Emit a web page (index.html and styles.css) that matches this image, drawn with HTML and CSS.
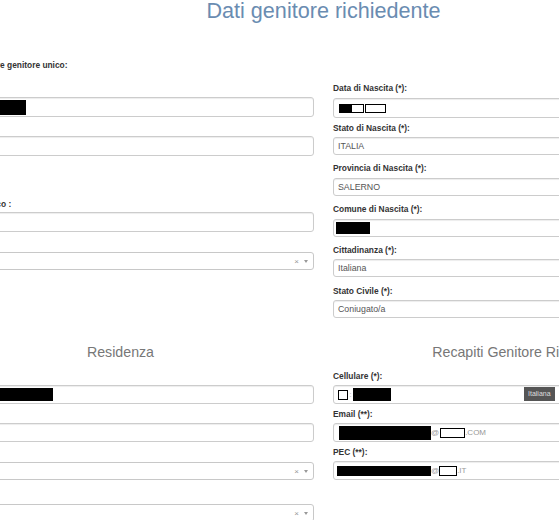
FILE: index.html
```html
<!DOCTYPE html>
<html lang="it">
<head>
<meta charset="UTF-8">
<meta name="viewport" content="width=device-width, initial-scale=1.0">
<title>Dati genitore richiedente</title>
<link rel="stylesheet" href="styles.css">
</head>
<body>
    <div class="page">
        <h2 class="title">Dati genitore richiedente</h2>

        <div class="row row-top">
            <div class="col">
                <label class="lbl lbl-top">Dichiara di essere genitore unico:</label>

                <div class="field">
                    <label class="lbl">Cognome (*):</label>
                    <div class="input"><span class="box fill w-cognome"></span></div>
                </div>
                <div class="field">
                    <label class="lbl">Nome (*):</label>
                    <div class="input"></div>
                </div>
                <div class="field">
                    <label class="lbl">Sesso (*):</label>
                    <div class="radios"><span class="radio"></span>M <span class="radio"></span>F</div>
                </div>
                <div class="field field-tight">
                    <label class="lbl">Indirizzo elettronico :</label>
                    <div class="input"></div>
                </div>
                <div class="field field-sel">
                    <label class="lbl">Titolo di studio:</label>
                    <div class="select"><span class="clear">×</span><span class="caret"></span></div>
                </div>
            </div>

            <div class="col col-right">
                <div class="field first">
                    <label class="lbl">Data di Nascita (*):</label>
                    <div class="input"><span class="box fill w-day"></span><span class="box hollow w-month"></span><span class="box hollow w-year"></span></div>
                </div>
                <div class="field small">
                    <label class="lbl">Stato di Nascita (*):</label>
                    <div class="input">ITALIA</div>
                </div>
                <div class="field small">
                    <label class="lbl">Provincia di Nascita (*):</label>
                    <div class="input">SALERNO</div>
                </div>
                <div class="field small">
                    <label class="lbl">Comune di Nascita (*):</label>
                    <div class="input"><span class="box fill w-comune"></span></div>
                </div>
                <div class="field small">
                    <label class="lbl">Cittadinanza (*):</label>
                    <div class="input">Italiana</div>
                </div>
                <div class="field small">
                    <label class="lbl">Stato Civile (*):</label>
                    <div class="input">Coniugato/a</div>
                </div>
            </div>
        </div>

        <div class="row row-bottom">
            <div class="col">
                <h3 class="subtitle">Residenza</h3>
                <div class="field">
                    <label class="lbl">Indirizzo (*):</label>
                    <div class="input"><span class="box fill w-via"></span></div>
                </div>
                <div class="field">
                    <label class="lbl">CAP:</label>
                    <div class="input"></div>
                </div>
                <div class="field field-sel gap">
                    <label class="lbl">Provincia (*):</label>
                    <div class="select"><span class="clear">×</span><span class="caret"></span></div>
                </div>
                <div class="field field-sel">
                    <label class="lbl">Comune (*):</label>
                    <div class="select"><span class="clear">×</span><span class="caret"></span></div>
                </div>
            </div>

            <div class="col">
                <h3 class="subtitle">Recapiti Genitore Richiedente</h3>
                <div class="field">
                    <label class="lbl">Cellulare (*):</label>
                    <div class="input phone">
                        <span class="box hollow w-prefix"></span><span class="sep">:</span><span class="box fill w-cell"></span>
                        <span class="tag">Italiana</span>
                    </div>
                </div>
                <div class="field">
                    <label class="lbl">Email (**):</label>
                    <div class="input"><span class="box fill w-mail"></span><span class="at">@</span><span class="box hollow w-domain"></span><span class="at">.COM</span></div>
                </div>
                <div class="field">
                    <label class="lbl">PEC (**):</label>
                    <div class="input"><span class="box fill w-pec"></span><span class="at">@</span><span class="box hollow w-pecdom"></span><span class="at">.IT</span></div>
                </div>
            </div>
        </div>
    </div>
</body>
</html>
```

FILE: styles.css
```css
* {
    box-sizing: border-box;
}
body {
    margin: 0;
    padding: 0;
    overflow: hidden;
    background: #fff;
    font-family: "Liberation Sans", Arial, sans-serif;
}
.page {
    width: 793px;
    margin-left: -73px;
}
.title {
    margin: -1px 0 0;
    font-size: 21.6px;
    line-height: 24px;
    font-weight: normal;
    color: #6a8cb1;
    text-align: center;
}
.row {
    display: grid;
    grid-template-columns: 387px 387px;
    column-gap: 19px;
    align-items: start;
}
.row-top {
    margin-top: 36px;
}
.col-right {
    padding-top: 23px;
}
.lbl {
    display: block;
    font-size: 8.4px;
    line-height: 12px;
    font-weight: bold;
    color: #333;
    white-space: nowrap;
}
.lbl-top {
    padding-left: 6px;
    margin-bottom: 11px;
}

/* campi */
.field {
    margin-bottom: 4px;
}
.field .lbl {
    margin-bottom: 3px;
}
.field-tight .lbl {
    margin-bottom: 2px;
}
.field-sel .lbl {
    margin-bottom: 4px;
}
.field.gap {
    margin-bottom: 8px;
}
.field.first .lbl {
    margin-bottom: 4px;
}
.field.first {
    margin-bottom: 3.5px;
}
.field.small {
    margin-bottom: 7.25px;
}
.field.small .lbl {
    margin-bottom: 3.5px;
}
.field.small .input {
    height: 18px;
}
.input {
    position: relative;
    display: flex;
    align-items: center;
    height: 20px;
    padding: 0 4px;
    border: 1px solid #ccc;
    border-radius: 3px;
    box-shadow: inset 0 1px 1px rgba(0, 0, 0, .075);
    font-size: 8.8px;
    color: #555;
    white-space: nowrap;
}
.row-bottom .input {
    height: 19px;
}
.select {
    display: flex;
    align-items: center;
    justify-content: flex-end;
    height: 18px;
    padding-right: 5px;
    border: 1px solid #c8c8c8;
    border-radius: 3px;
    background: #fff;
}
.clear {
    font-size: 8px;
    color: #999;
    margin-right: 5px;
}
.caret {
    width: 0;
    height: 0;
    border-left: 2.5px solid transparent;
    border-right: 2.5px solid transparent;
    border-top: 3.5px solid #999;
}
.radios {
    height: 19px;
    width: 60px;
    display: flex;
    align-items: center;
    gap: 3px;
    font-size: 8.4px;
    color: #333;
}
.radio {
    width: 8px;
    height: 8px;
    border: 1px solid #999;
    border-radius: 50%;
}

/* titoli sezione */
.row-bottom {
    margin-top: 17px;
}
.subtitle {
    margin: 0 0 8px;
    font-size: 14.2px;
    line-height: 20px;
    font-weight: normal;
    color: #777;
    text-align: center;
    white-space: nowrap;
}

/* dati oscurati */
.box {
    display: inline-block;
    flex: none;
}
.fill {
    background: #000;
}
.hollow {
    border: 1.5px solid #000;
    background: #fff;
}
.w-cognome { width: 95px; height: 15px; margin-left: -1px; }
.w-via { width: 122px; height: 13px; margin-left: -1px; }
.w-day { width: 12px; height: 9px; margin-left: 1px; }
.w-month { width: 13px; height: 9px; }
.w-year { width: 21px; height: 9px; margin-left: 1px; }
.w-comune { width: 34px; height: 12px; margin-left: -2px; }
.w-prefix { width: 10px; height: 10px; }
.w-cell { width: 38px; height: 13px; }
.w-mail { width: 92px; height: 14px; margin-left: 1px; }
.w-domain { width: 25px; height: 10px; margin-left: 1px; }
.w-pec { width: 94px; height: 10px; margin-left: -1px; }
.w-pecdom { width: 18px; height: 10px; margin-left: 0; }
.sep {
    width: 5px;
    font-size: 7px;
    color: #999;
    text-align: center;
}
.at {
    font-size: 8px;
    color: #999;
}
.tag {
    position: absolute;
    left: 190px;
    top: 1px;
    height: 14px;
    padding: 0 4px;
    line-height: 14px;
    background: #555;
    color: #ddd;
    font-size: 7px;
}
```
